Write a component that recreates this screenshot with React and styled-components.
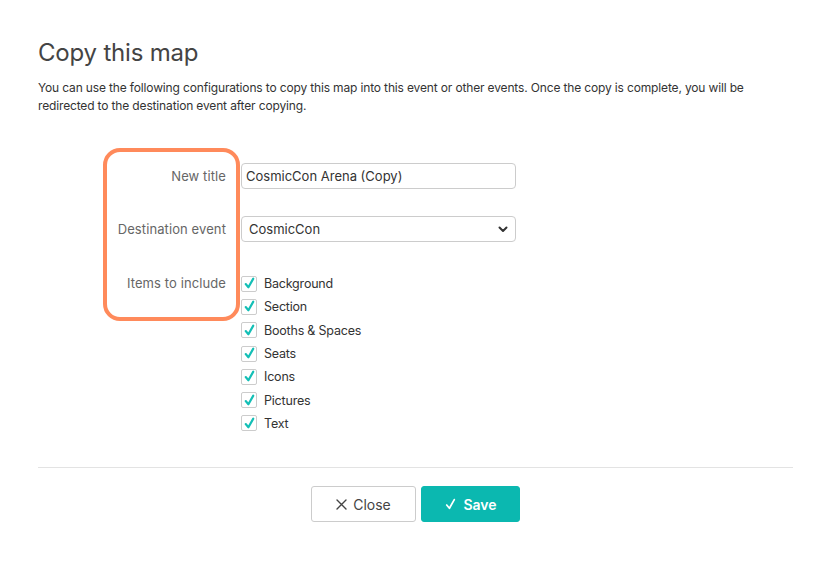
import React from 'react'
import styled, { createGlobalStyle } from 'styled-components'

const GlobalStyle = createGlobalStyle`
  html, body {
    margin: 0;
    padding: 0;
    background: #fff;
  }
  body {
    font-family: 'Inter', 'Noto Sans', sans-serif;
    color: #333;
  }
`

const Dialog = styled.div`
  width: 831px;
  height: 563px;
  box-sizing: border-box;
  padding: 38px 38px 0 38px;
`

const Title = styled.h1`
  margin: 0;
  font-size: 24px;
  line-height: 30px;
  font-weight: 400;
  color: #444;
  letter-spacing: -0.2px;
`

const Description = styled.p`
  margin: 11px 0 0 0;
  font-size: 12px;
  line-height: 18px;
  color: #333;
  letter-spacing: -0.15px;
`

const Form = styled.div`
  position: relative;
  display: grid;
  grid-template-columns: 188px 275px;
  column-gap: 15px;
  margin-top: 48px;
`

const Label = styled.div`
  text-align: right;
  font-size: 13px;
  color: #666;
  letter-spacing: 0.1px;
  height: 26px;
  line-height: ${p => (p.$top ? '20px' : '26px')};
  margin-top: ${p => (p.$top ? '4px' : '0')};
  margin-bottom: 27px;
`

const Field = styled.div`
  height: 26px;
  margin-bottom: 27px;
  position: relative;
`

const TextInput = styled.input`
  width: 100%;
  height: 26px;
  box-sizing: border-box;
  border: 1px solid #ccc;
  border-radius: 4px;
  padding: 0 4px;
  font-family: inherit;
  font-size: 13px;
  color: #333;
  outline: none;
`

const Select = styled.div`
  height: 26px;
  box-sizing: border-box;
  border: 1px solid #ccc;
  border-radius: 4px;
  padding: 0 7px;
  display: flex;
  align-items: center;
  justify-content: space-between;
  font-size: 13px;
  color: #333;
`

const CheckList = styled.div`
  display: flex;
  flex-direction: column;
  margin-top: 3px;
`

const CheckRow = styled.label`
  display: flex;
  align-items: center;
  height: 23.3px;
  gap: 7px;
  font-size: 12.5px;
  color: #333;
  letter-spacing: -0.2px;
`

const Box = styled.span`
  width: 16px;
  height: 16px;
  box-sizing: border-box;
  border: 1px solid #ccc;
  border-radius: 2px;
  display: flex;
  align-items: center;
  justify-content: center;
  background: #fff;
`

const Highlight = styled.div`
  position: absolute;
  left: 65px;
  top: -15px;
  width: 137px;
  height: 173px;
  box-sizing: border-box;
  border: 4px solid #ff8a5b;
  border-radius: 17px;
  pointer-events: none;
`

const Divider = styled.hr`
  border: none;
  border-top: 1px solid #e3e3e3;
  margin: 32px 0 0 0;
`

const Footer = styled.div`
  display: flex;
  justify-content: center;
  gap: 5px;
  margin-top: 18px;
`

const Button = styled.button`
  height: 36px;
  box-sizing: border-box;
  border-radius: 3px;
  display: flex;
  align-items: center;
  justify-content: center;
  gap: 6px;
  font-family: inherit;
  font-size: 14px;
  cursor: pointer;
  width: ${p => p.$width}px;
  border: 1px solid ${p => (p.$primary ? '#0bb8b0' : '#ccc')};
  background: ${p => (p.$primary ? '#0bb8b0' : '#fff')};
  color: ${p => (p.$primary ? '#fff' : '#444')};
  font-weight: ${p => (p.$primary ? 600 : 400)};
`

const Check = ({ size = 13, color = '#14bfb6', width = 2 }) => (
  <svg width={size} height={size} viewBox="0 0 12 12" fill="none">
    <path d="M2.5 6.5 L5 9.5 L9.5 1.5" stroke={color} strokeWidth={width} strokeLinecap="round" strokeLinejoin="round" />
  </svg>
)

const items = ['Background', 'Section', 'Booths & Spaces', 'Seats', 'Icons', 'Pictures', 'Text']

export default function App() {
  return (
    <>
      <GlobalStyle />
      <Dialog>
        <Title>Copy this map</Title>
        <Description>
          You can use the following configurations to copy this map into this event or other events. Once the copy is complete, you will be
          <br />
          redirected to the destination event after copying.
        </Description>
        <Form>
          <Label>New title</Label>
          <Field>
            <TextInput defaultValue="CosmicCon Arena (Copy)" />
          </Field>
          <Label>Destination event</Label>
          <Field>
            <Select>
              <span>CosmicCon</span>
              <svg width="10" height="7" viewBox="0 0 10 7" fill="none">
                <path d="M1.5 1.5 L5 5 L8.5 1.5" stroke="#333" strokeWidth="2" strokeLinecap="round" strokeLinejoin="round" />
              </svg>
            </Select>
          </Field>
          <Label $top>Items to include</Label>
          <CheckList>
            {items.map(item => (
              <CheckRow key={item}>
                <Box>
                  <Check />
                </Box>
                {item}
              </CheckRow>
            ))}
          </CheckList>
          <Highlight />
        </Form>
        <Divider />
        <Footer>
          <Button $width={105}>
            <svg width="11" height="11" viewBox="0 0 11 11" fill="none">
              <path d="M1 1 L10 10 M10 1 L1 10" stroke="#444" strokeWidth="1.4" strokeLinecap="round" />
            </svg>
            Close
          </Button>
          <Button $primary $width={99}>
            <Check size={13} color="#fff" width={1.6} />
            Save
          </Button>
        </Footer>
      </Dialog>
    </>
  )
}
